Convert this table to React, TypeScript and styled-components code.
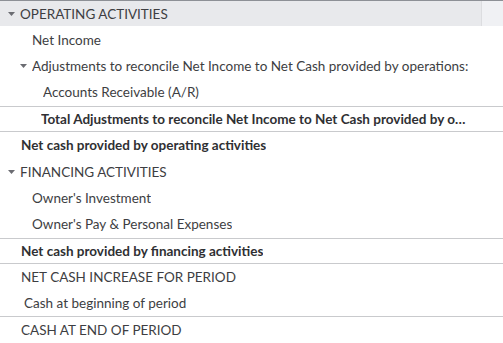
import styled, { createGlobalStyle } from "styled-components";

const GlobalStyle = createGlobalStyle`
  html, body {
    margin: 0;
    padding: 0;
    background: #ffffff;
  }
  body {
    font-family: Lato, "Open Sans", sans-serif;
    color: #393a3d;
  }
`;

const Table = styled.div`
  width: 503px;
  display: flex;
  flex-direction: column;
  overflow: hidden;
`;

const Row = styled.div<{ $header?: boolean; $top?: boolean; $bottom?: boolean }>`
  display: grid;
  grid-template-columns: 481px 1fr;
  height: 26.4px;
  box-sizing: border-box;
  background: ${(p) => (p.$header ? "#e8e9ec" : "transparent")};
  border-top: ${(p) =>
    p.$header ? "1px solid #8d9096" : p.$top ? "1px solid #c9cacd" : "none"};
  border-bottom: ${(p) => (p.$bottom ? "1px solid #c9cacd" : "none")};
`;

const Label = styled.div<{ $indent: number; $bold?: boolean }>`
  display: flex;
  align-items: center;
  gap: 5px;
  padding-left: ${(p) => p.$indent}px;
  padding-right: 10px;
  font-size: 13.5px;
  font-weight: ${(p) => (p.$bold ? 700 : 400)};
  color: ${(p) => (p.$bold ? "#2f3033" : "#3d3e42")};
  white-space: nowrap;
  overflow: hidden;
  min-width: 0;
`;

const Text = styled.span`
  overflow: hidden;
  text-overflow: ellipsis;
`;

const Spare = styled.div<{ $header?: boolean }>`
  background: ${(p) => (p.$header ? "#f0f1f4" : "transparent")};
  border-left: ${(p) => (p.$header ? "1px solid #dcdde0" : "none")};
`;

const Caret = () => (
  <svg width="7" height="4" viewBox="0 0 7 4" style={{ flex: "none" }}>
    <path d="M0 0 L7 0 L3.5 4 Z" fill="#6b6c72" />
  </svg>
);

type Line = {
  text: string;
  indent: number;
  caret?: boolean;
  bold?: boolean;
  header?: boolean;
  top?: boolean;
  bottom?: boolean;
};

const lines: Line[] = [
  { text: "OPERATING ACTIVITIES", indent: 8, caret: true, header: true },
  { text: "Net Income", indent: 32 },
  { text: "Adjustments to reconcile Net Income to Net Cash provided by operations:", indent: 20, caret: true },
  { text: "Accounts Receivable (A/R)", indent: 43 },
  { text: "Total Adjustments to reconcile Net Income to Net Cash provided by operations", indent: 41, bold: true, top: true, bottom: true },
  { text: "Net cash provided by operating activities", indent: 21, bold: true },
  { text: "FINANCING ACTIVITIES", indent: 8, caret: true },
  { text: "Owner's Investment", indent: 32 },
  { text: "Owner's Pay & Personal Expenses", indent: 32 },
  { text: "Net cash provided by financing activities", indent: 21, bold: true, top: true, bottom: true },
  { text: "NET CASH INCREASE FOR PERIOD", indent: 21 },
  { text: "Cash at beginning of period", indent: 24, bottom: true },
  { text: "CASH AT END OF PERIOD", indent: 21 },
];

export default function App() {
  return (
    <>
      <GlobalStyle />
      <Table>
        {lines.map((l) => (
          <Row key={l.text} $header={l.header} $top={l.top} $bottom={l.bottom}>
            <Label $indent={l.indent} $bold={l.bold}>
              {l.caret && <Caret />}
              <Text>{l.text}</Text>
            </Label>
            <Spare $header={l.header} />
          </Row>
        ))}
      </Table>
    </>
  );
}
